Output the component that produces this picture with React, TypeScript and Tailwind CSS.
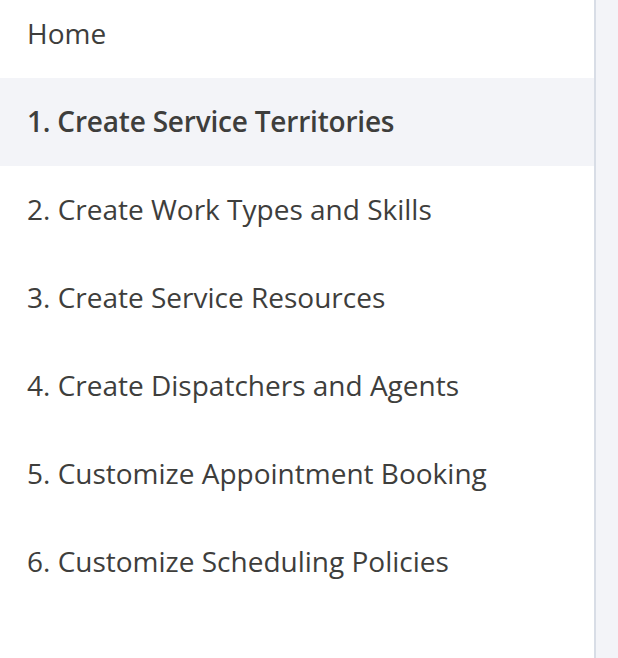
const steps = [
  "Home",
  "1. Create Service Territories",
  "2. Create Work Types and Skills",
  "3. Create Service Resources",
  "4. Create Dispatchers and Agents",
  "5. Customize Appointment Booking",
  "6. Customize Scheduling Policies",
]

export default function App() {
  const active = 1
  return (
    <div className="flex h-[658px] w-[618px] overflow-hidden bg-[#f3f4f8]" style={{ fontFamily: "'Open Sans', sans-serif" }}>
      {/* Setup steps nav */}
      <nav className="h-full w-[596px] shrink-0 border-r-2 border-[#d8dde6] bg-white">
        <ul className="-mt-[10px]">
          {steps.map((step, i) => (
            <li
              key={step}
              className={
                i === active
                  ? "flex h-[88px] items-center bg-[#f3f4f8] pb-[3px] pl-[27px] text-[28px] font-semibold tracking-[-0.2px] text-[#3e3e3c]"
                  : "flex h-[88px] items-center pb-[3px] pl-[27px] text-[28px] text-[#3e3e3c]"
              }
            >
              {step}
            </li>
          ))}
        </ul>
      </nav>
      <div className="flex-1" />
    </div>
  )
}
